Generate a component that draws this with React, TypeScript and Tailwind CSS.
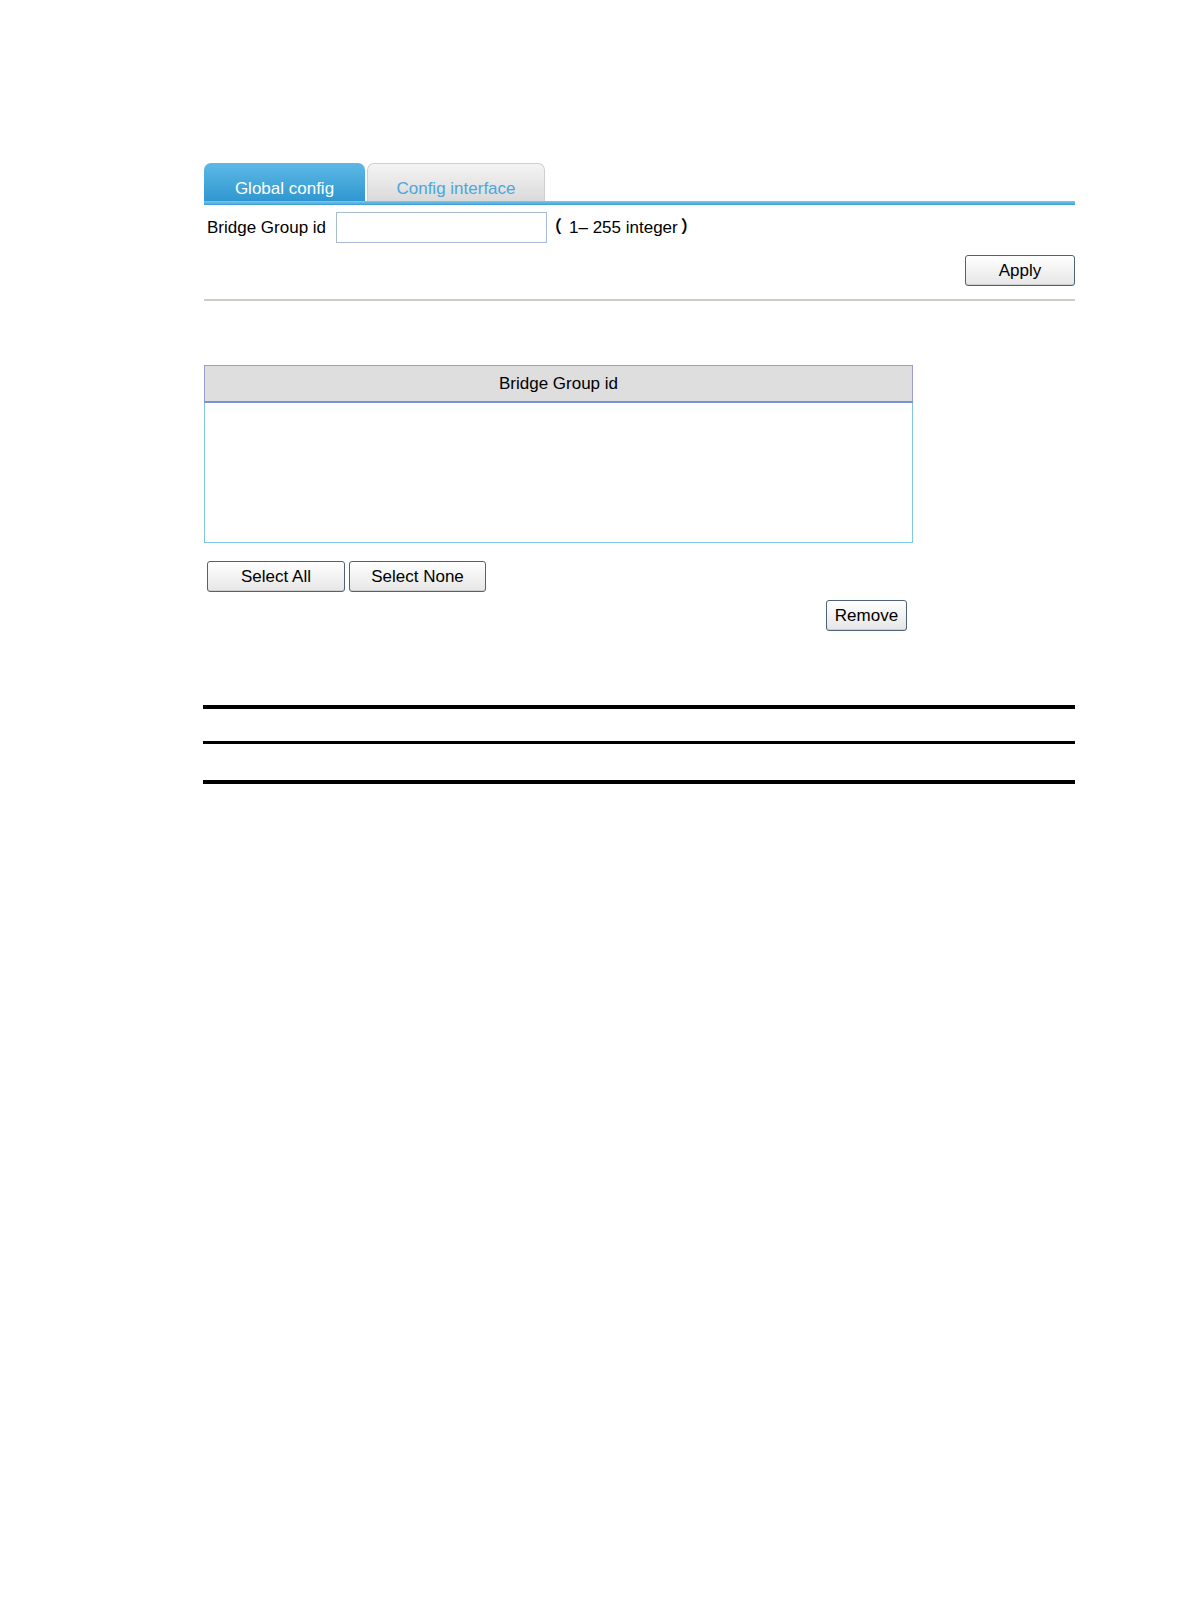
import React from 'react';

const font = { fontFamily: '"Liberation Sans", Arial, sans-serif' };

function Btn({ label, className = '' }: { label: string; className?: string }) {
  return (
    <button
      className={`h-[31px] rounded-[3px] border border-[#4f6278] bg-gradient-to-b from-white to-[#e6e6e6] text-[17px] text-black shadow-[inset_0_-1px_0_#cfcfcf] ${className}`}
    >
      {label}
    </button>
  );
}

export default function App() {
  return (
    <div className="min-h-[1616px] w-[1190px] bg-white" style={font}>
      <div className="ml-[204px] w-[871px] pt-[163px]">
        {/* Tabs */}
        <div className="flex h-[38px] items-end">
          <div className="flex h-[38px] w-[161px] items-center justify-center rounded-t-[7px] bg-gradient-to-b from-[#5cb9e6] to-[#2f97d0] pt-[13px] text-[17px] text-white">
            Global config
          </div>
          <div className="ml-[2px] flex h-[38px] w-[178px] items-center justify-center rounded-t-[7px] border border-b-0 border-[#cfcfcf] bg-gradient-to-b from-[#f4f4f4] to-[#dadada] pt-[12px] text-[17px] text-[#4ba6dc]">
            Config interface
          </div>
        </div>
        <div className="h-[4px] bg-gradient-to-b from-[#7cc8ec] to-[#3a9fd4]" />

        {/* Form row */}
        <div className="mt-[7px] flex h-[31px] items-center text-[17px] text-black">
          <span className="ml-[3px] w-[129px]">Bridge Group id</span>
          <div className="h-[31px] w-[211px] border border-[#a7bcd2] bg-white" />
          <span
            className="-ml-[2px] flex items-center"
            style={{ fontFamily: '"Liberation Sans", "Noto Sans CJK SC", sans-serif' }}
          >
            <span className="font-bold">（</span>
            <span className="ml-[7px] mr-[3px]">1– 255 integer</span>
            <span className="font-bold">）</span>
          </span>
        </div>
        <div className="mt-[12px] flex justify-end">
          <Btn label="Apply" className="w-[110px]" />
        </div>
        <div className="mt-[13px] h-[2px] bg-[#cdcdc4]" />

        {/* Table */}
        <div className="mt-[64px] w-[709px]">
          <div className="flex h-[36px] items-center justify-center border border-b-0 border-[#9d9dcc] bg-[#dedede] text-[17px] text-black">
            Bridge Group id
          </div>
          <div className="h-[2px] bg-[#7d8fd8]" />
          <div className="h-[140px] border border-t-0 border-[#80c8e2] bg-white" />
        </div>

        <div className="mt-[18px] ml-[3px] flex gap-[4px]">
          <Btn label="Select All" className="w-[138px]" />
          <Btn label="Select None" className="w-[137px]" />
        </div>
        <div className="mt-[8px] flex w-[703px] justify-end">
          <Btn label="Remove" className="w-[81px]" />
        </div>

        {/* Rules */}
        <div className="-ml-[1px] mt-[74px] w-[872px]">
          <div className="h-[4px] bg-black" />
          <div className="mt-[32px] h-[3px] bg-black" />
          <div className="mt-[36px] h-[4px] bg-black" />
        </div>
      </div>
    </div>
  );
}
